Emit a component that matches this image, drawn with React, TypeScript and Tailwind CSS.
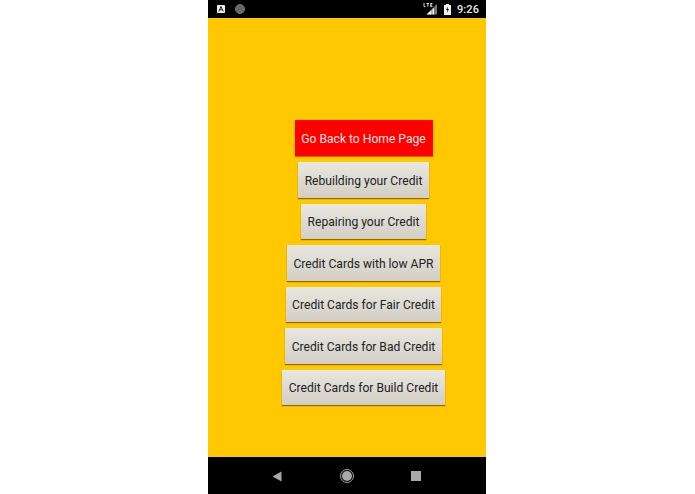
const labels = [
  "Rebuilding your Credit",
  "Repairing your Credit",
  "Credit Cards with low APR",
  "Credit Cards for Fair Credit",
  "Credit Cards for Bad Credit",
  "Credit Cards for Build Credit",
];

export default function App() {
  return (
    <div className="h-[494px] w-[695px] overflow-hidden bg-white pl-[208px] font-['Roboto',sans-serif]">
      <div className="flex h-full w-[278px] flex-col">
        <div className="flex h-[18px] items-center bg-black pl-[9px] pr-[7px] text-white">
          <svg width="8" height="8" viewBox="0 0 9 9" className="mr-[10px]">
            <rect width="9" height="9" rx="1" fill="#f2f2f2" />
            <path d="M2 7.4 4.5 1.6 7 7.4M3 5.4H6" fill="none" stroke="#222" strokeWidth="1.1" />
          </svg>
          <div className="h-[10px] w-[10px] rounded-full border border-[#777] bg-[#666]" />
          <div className="flex-1" />
          <svg width="15" height="12" viewBox="0 0 14 12" className="mr-[6px] -mt-[1px]">
            <path d="M13.5 1V11.5H3Z" fill="#777" />
            <path d="M8 7V11.5H3Z M9 5.5H10.5V11.5H9Z" fill="#f2f2f2" />
            <path d="M0.5 0V3.6H2M3 .5H5.6M4.3 .5V3.6M7 .4H9M7.2 .4V3.6H9M7.2 2H8.7" fill="none" stroke="#eee" strokeWidth=".9" />
          </svg>
          <svg width="7" height="11" viewBox="0 0 7 11" className="mr-[6px]">
            <path d="M2 0H5V1H7V11H0V1H2Z" fill="#f2f2f2" />
            <path d="M4 2.5 2 6H3.3L3 8.8 5 5H3.7Z" fill="#111" />
          </svg>
          <span className="text-[11px] font-medium leading-none tracking-[0.1px] text-[#e8e8e8]">9:26</span>
        </div>
        <div className="flex flex-1 flex-col items-center gap-[6px] bg-[#ffc800] pb-[51px] pl-[33px] pt-[102px]">
          <button className="flex h-[36px] w-[138px] items-center justify-center bg-[#fe0000] pt-[2px] text-[12.1px] text-[#fde8e0] shadow-[0_1px_1px_rgba(150,80,0,0.7)]">
            Go Back to Home Page
          </button>
          {labels.map((label) => (
            <button
              key={label}
              className="flex h-[35.5px] items-center justify-center whitespace-nowrap bg-gradient-to-b from-[#e9e7e1] to-[#d2cec4] px-[6.5px] pt-[2px] text-[12.1px] text-[#222] shadow-[0_1px_1px_rgba(120,80,0,0.8)]"
            >
              {label}
            </button>
          ))}
        </div>
        <div className="flex h-[37px] items-center bg-black pt-[1px]">
          <svg width="10" height="11" viewBox="0 0 10 11" className="ml-[64px]">
            <path d="M9.5 0.5V10.5L0.5 5.5Z" fill="#a8a8a8" />
          </svg>
          <div className="ml-[58px] flex h-[14px] w-[14px] items-center justify-center rounded-full border border-[#a8a8a8]">
            <div className="h-[10px] w-[10px] rounded-full bg-[#a8a8a8]" />
          </div>
          <div className="ml-[57px] h-[10px] w-[10px] bg-[#a8a8a8]" />
        </div>
      </div>
    </div>
  );
}
